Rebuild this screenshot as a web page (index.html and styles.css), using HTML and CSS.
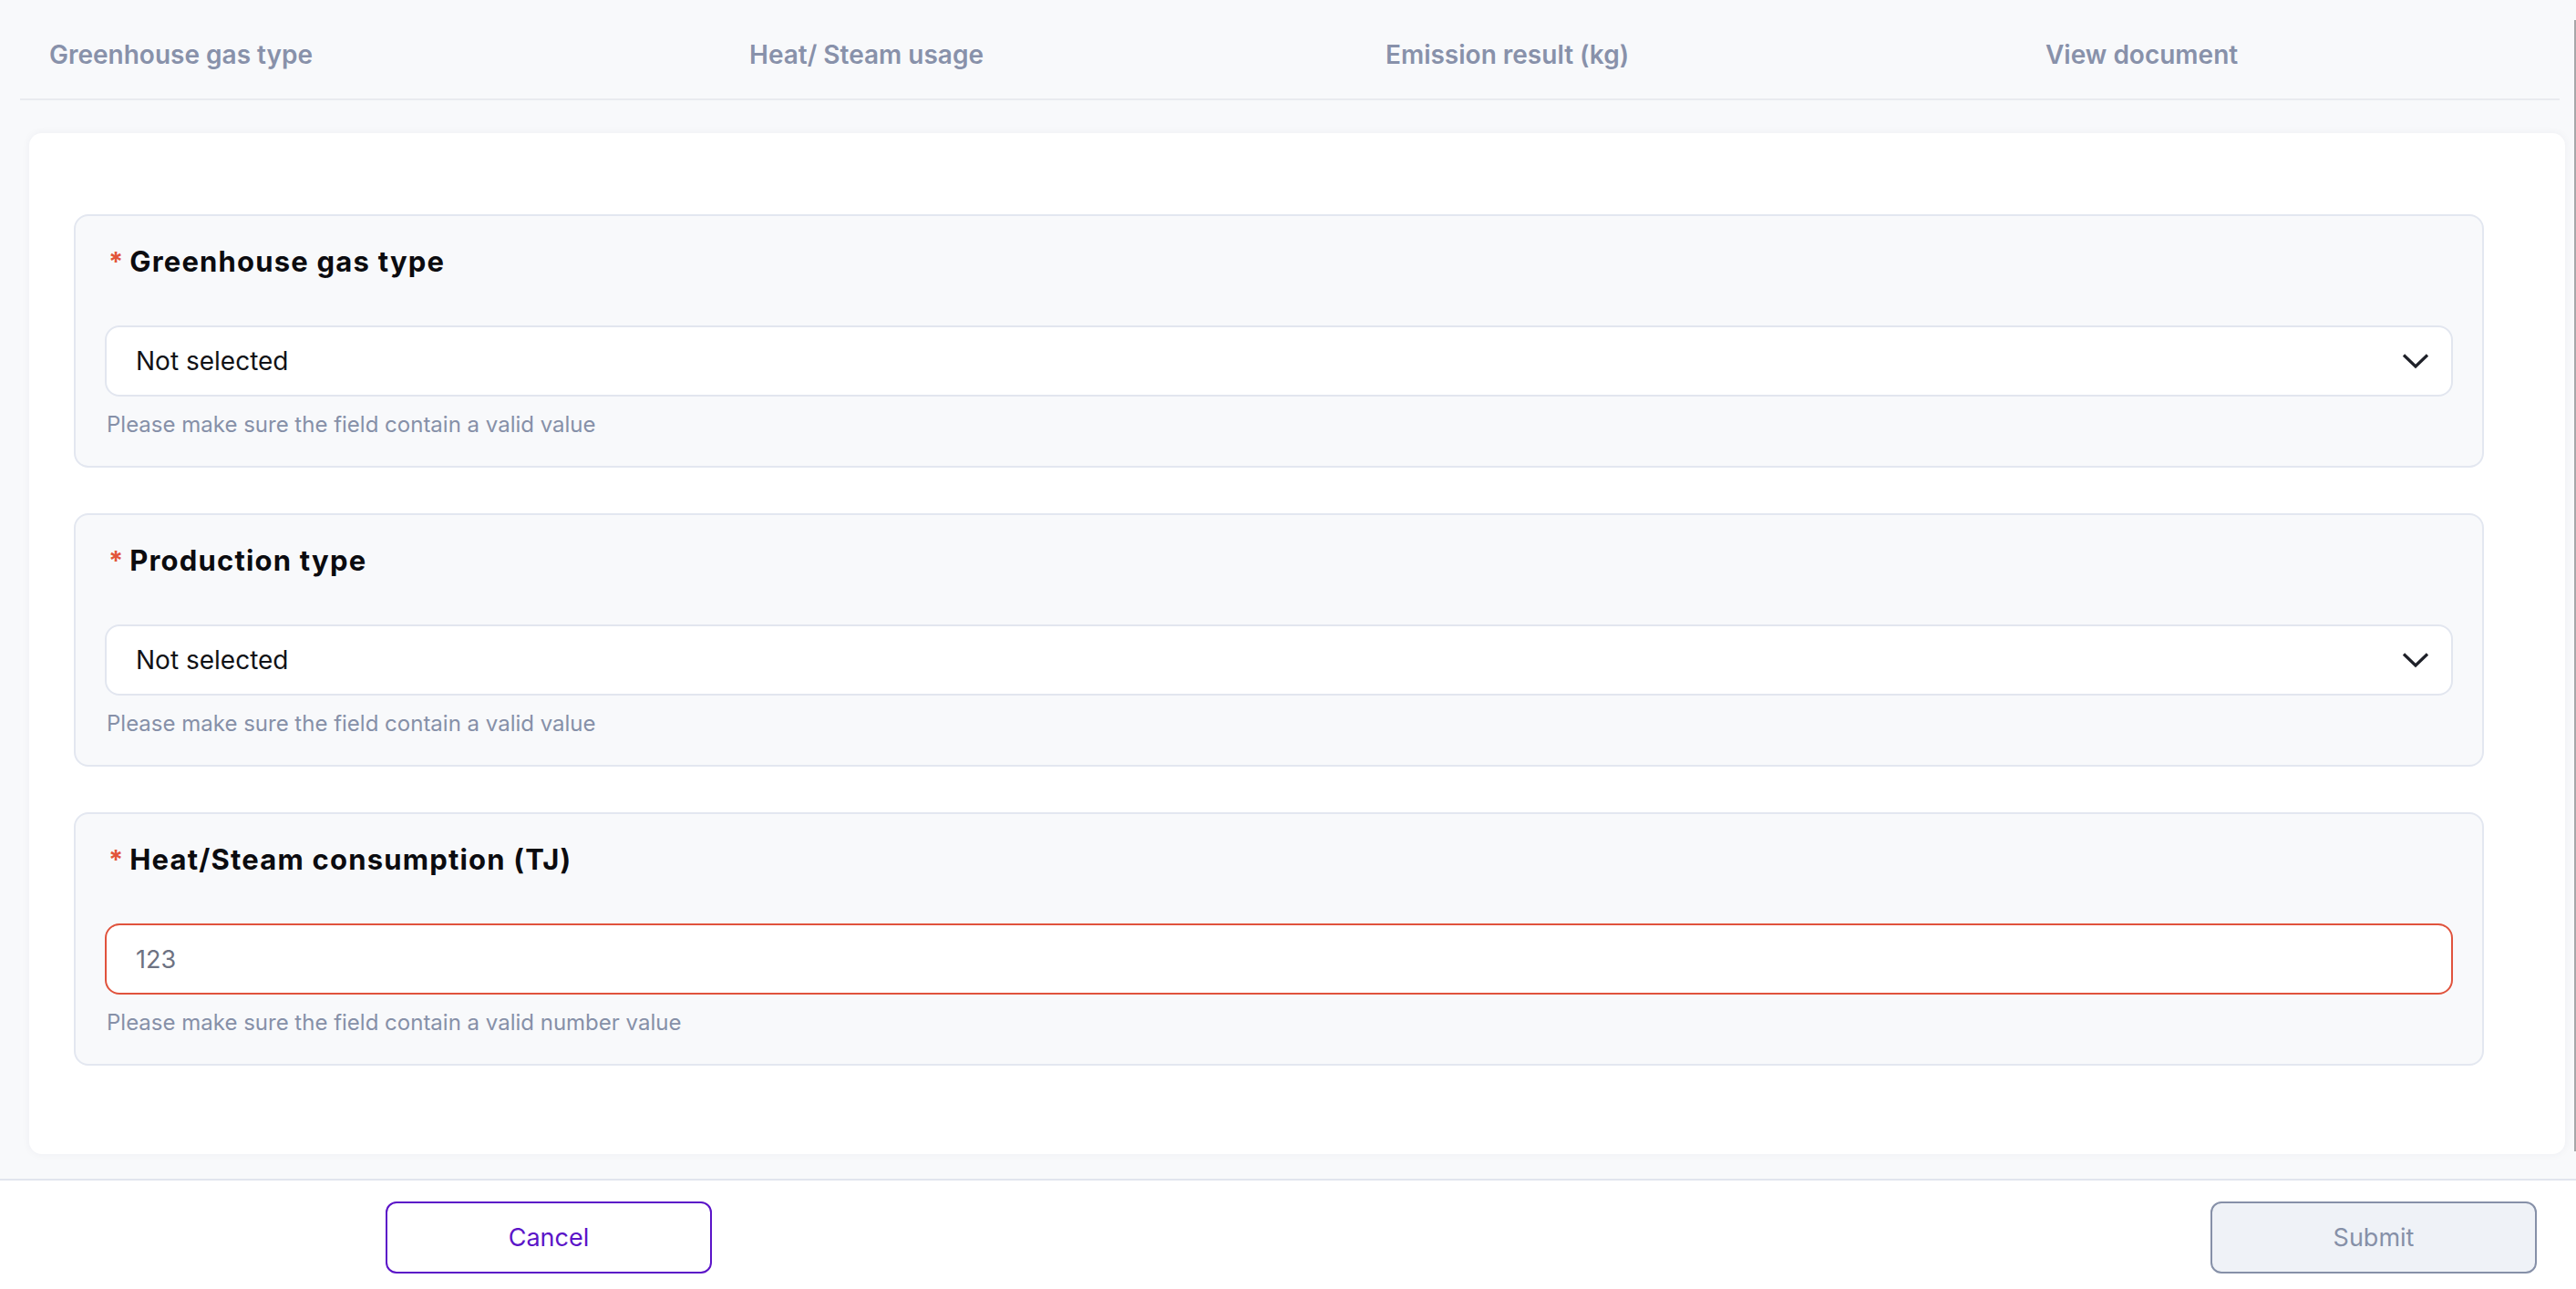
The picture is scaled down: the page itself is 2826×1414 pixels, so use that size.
FILE: index.html
```html
<!DOCTYPE html>
<html lang="en">
<head>
<meta charset="utf-8">
<title>Heat/Steam emission</title>
<link rel="stylesheet" href="styles.css">
</head>
<body>
<div class="page">
  <div class="main">
    <div class="content">
      <div class="table-head">
        <div class="th">Greenhouse gas type</div>
        <div class="th">Heat/ Steam usage</div>
        <div class="th">Emission result (kg)</div>
        <div class="th">View document</div>
      </div>
      <div class="card">
        <section class="field">
          <div class="label"><span class="req">*</span>Greenhouse gas type</div>
          <div class="input select">
            <span class="value">Not selected</span>
            <svg class="chev" width="30" height="18" viewBox="0 0 30 18"><path d="M2 2.5 L15 15 L28 2.5" fill="none" stroke="#1f2129" stroke-width="3.2"/></svg>
          </div>
          <div class="help">Please make sure the field contain a valid value</div>
        </section>
        <section class="field">
          <div class="label"><span class="req">*</span>Production type</div>
          <div class="input select">
            <span class="value">Not selected</span>
            <svg class="chev" width="30" height="18" viewBox="0 0 30 18"><path d="M2 2.5 L15 15 L28 2.5" fill="none" stroke="#1f2129" stroke-width="3.2"/></svg>
          </div>
          <div class="help">Please make sure the field contain a valid value</div>
        </section>
        <section class="field">
          <div class="label"><span class="req">*</span>Heat/Steam consumption (TJ)</div>
          <div class="input error">
            <span class="value muted">123</span>
          </div>
          <div class="help">Please make sure the field contain a valid number value</div>
        </section>
      </div>
    </div>
    <div class="scrollbar"></div>
  </div>
  <footer class="footer">
    <button class="btn cancel">Cancel</button>
    <button class="btn submit">Submit</button>
  </footer>
</div>
</body>
</html>
```
FILE: styles.css
```css
html, body {
  margin: 0;
  padding: 0;
}
body {
  width: 2826px;
  height: 1414px;
  overflow: hidden;
  background: #f8f9fb;
  font-family: Inter, "Noto Sans", sans-serif;
}
.page {
  display: flex;
  flex-direction: column;
  height: 1414px;
}
.main {
  display: flex;
  height: 1293px;
}
.content {
  flex: 1;
}
.scrollbar {
  width: 2px;
  margin-top: 22px;
  height: 1241px;
  background: #a7a7a9;
}
.table-head {
  display: grid;
  grid-template-columns: 768px 698px 724px 1fr;
  margin-left: 22px;
  width: 2786px;
  height: 108px;
  border-bottom: 2px solid #e9ebef;
  align-items: center;
}
.th {
  padding-left: 32px;
  padding-top: 12px;
  font-size: 28px;
  font-weight: 600;
  color: #8891aa;
}
.card {
  margin: 36px 0 0 32px;
  width: 2782px;
  height: 1120px;
  box-sizing: border-box;
  background: #fff;
  border-radius: 14px;
  box-shadow: 0 0 10px rgba(30, 40, 70, 0.05);
  padding: 89px 89px 0 49px;
  display: flex;
  flex-direction: column;
  gap: 50px;
}
.field {
  height: 278px;
  box-sizing: border-box;
  border: 2px solid #e3e7f0;
  border-radius: 16px;
  background: #f8f9fb;
  padding: 29px 32px 0 32px;
}
.label {
  font-size: 31px;
  line-height: 42px;
  font-weight: 700;
  letter-spacing: 1.2px;
  color: #0b0b0f;
  display: flex;
  align-items: flex-start;
  padding-left: 4px;
}
.req {
  color: #e2553a;
  font-size: 29px;
  line-height: 30px;
  margin-top: 6px;
  margin-right: 7px;
  font-weight: 700;
  letter-spacing: 0;
}
.input {
  margin-top: 49px;
  height: 78px;
  box-sizing: border-box;
  border: 2px solid #e2e6ef;
  border-radius: 16px;
  background: #fff;
  display: flex;
  align-items: center;
  justify-content: space-between;
  padding: 0 24px 0 32px;
}
.input.error {
  border-color: #e0533d;
}
.value {
  font-size: 28px;
  color: #111216;
}
.value.muted {
  font-size: 27px;
  color: #6d7282;
}
.chev {
  display: block;
}
.help {
  margin-top: 17px;
  padding-left: 2px;
  font-size: 24px;
  line-height: 28px;
  color: #8690a8;
}
.footer {
  flex: 1;
  background: #fff;
  border-top: 2px solid #e1e5ee;
  display: flex;
  justify-content: space-between;
  align-items: flex-start;
  padding: 23px 43px 0 423px;
}
.btn {
  width: 358px;
  height: 79px;
  border-radius: 12px;
  font-family: Inter, "Noto Sans", sans-serif;
  font-size: 27px;
  font-weight: 400;
  cursor: pointer;
}
.cancel {
  background: #fff;
  border: 2px solid #5b14c8;
  color: #5b14c8;
}
.submit {
  background: #eff2f7;
  border: 2px solid #8690a8;
  color: #8690a8;
}
```
